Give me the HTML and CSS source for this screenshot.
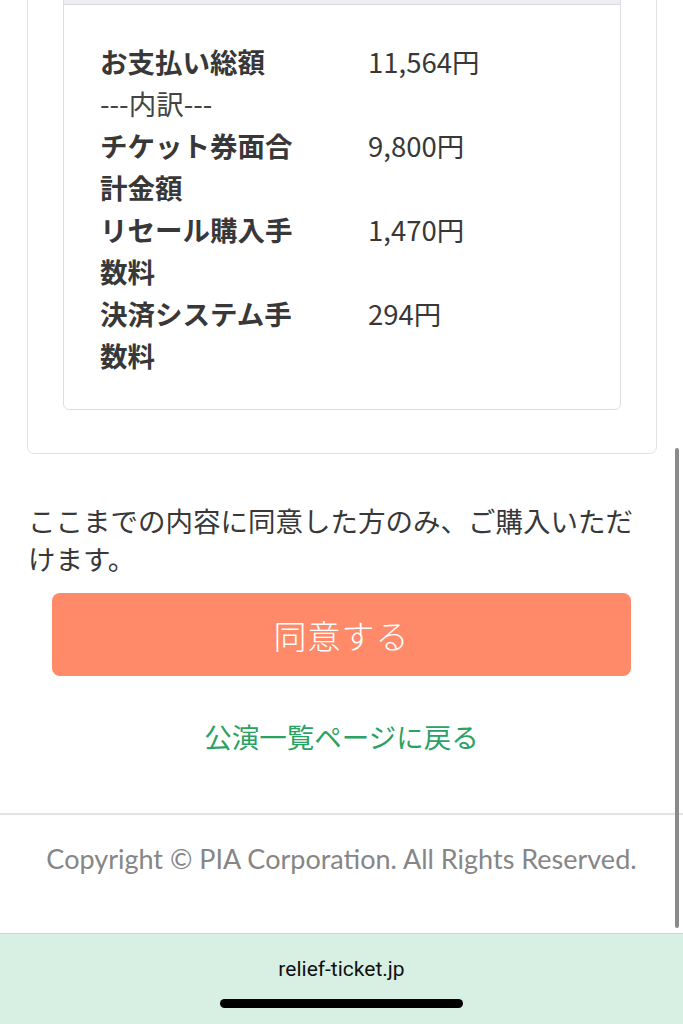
FILE: index.html
```html
<!DOCTYPE html>
<html lang="ja">
<head>
<meta charset="utf-8">
<title>購入確認</title>
<link rel="stylesheet" href="styles.css">
</head>
<body>
<div class="page">
  <section class="outer-card">
    <div class="inner-card">
      <div class="inner-head"></div>
      <div class="inner-body">
        <div class="fee-grid">
          <div class="label">お支払い総額</div><div class="value">11,564円</div>
          <div class="sub">---内訳---</div>
          <div class="label">チケット券面合計金額</div><div class="value">9,800円</div>
          <div class="label">リセール購入手数料</div><div class="value">1,470円</div>
          <div class="label">決済システム手数料</div><div class="value">294円</div>
        </div>
      </div>
    </div>
  </section>

  <p class="agree-text">ここまでの内容に同意した方のみ、ご購入いただけます。</p>
  <div class="btn-wrap"><button class="agree-btn" type="button">同意する</button></div>
  <div class="back-wrap"><a class="back-link" href="#">公演一覧ページに戻る</a></div>

  <footer class="site-footer">Copyright © PIA Corporation. All Rights Reserved.</footer>
</div>

<div class="browser-bar">
  <div class="url">relief-ticket.jp</div>
  <div class="home-indicator"></div>
</div>
<div class="scrollbar"></div>
</body>
</html>
```

FILE: styles.css
```css
html, body {
  margin: 0;
  padding: 0;
  background: #ffffff;
}
body {
  font-family: "Noto Sans CJK JP", "Noto Sans", sans-serif;
  color: #333333;
  overflow: hidden;
  height: 1024px;
  position: relative;
}
.page {
  margin-top: -94px;
}
.outer-card {
  margin: 0 26px 0 27px;
  border: 1px solid #e2e2e2;
  border-radius: 7px;
  padding: 36px 35px 43px 35px;
}
.inner-card {
  border: 1px solid #dedede;
  border-radius: 6px;
  overflow: hidden;
}
.inner-head {
  height: 60px;
  background: #eeeef2;
  border-bottom: 1px solid #dcdce0;
}
.inner-body {
  padding: 35px 20px 33px 36px;
}
.fee-grid {
  display: grid;
  grid-template-columns: 200px 1fr;
  column-gap: 68px;
  font-size: 27.5px;
  line-height: 42px;
}
.label {
  font-weight: 700;
  color: #383838;
}
.value {
  font-weight: 400;
  color: #383838;
}
.sub {
  grid-column: 1 / span 2;
  font-weight: 400;
  color: #444;
}
.agree-text {
  margin: 47px 27px 0 28px;
  font-size: 27.5px;
  line-height: 38px;
  color: #383838;
}
.btn-wrap {
  margin: 16px 52px 0 52px;
}
.agree-btn {
  display: block;
  width: 100%;
  height: 83px;
  border: none;
  border-radius: 8px;
  background: #ff8a6a;
  color: #ffffff;
  font-family: "Noto Sans CJK JP", sans-serif;
  font-size: 33px;
  font-weight: 300;
  letter-spacing: 1px;
}
.back-wrap {
  margin-top: 41px;
  text-align: center;
  line-height: 38px;
}
.back-link {
  font-size: 27.5px;
  color: #2aa262;
  text-decoration: none;
}
.site-footer {
  margin-top: 53px;
  border-top: 2px solid #e4e4e4;
  padding: 29px 0 59px;
  text-align: center;
  font-family: "Lato", "Noto Sans", sans-serif;
  font-size: 27px;
  line-height: 30px;
  color: #868686;
}
.browser-bar {
  position: absolute;
  left: 0;
  right: 0;
  bottom: 0;
  height: 90px;
  background: #d8f0e4;
  border-top: 1px solid #c4dccf;
  display: flex;
  flex-direction: column;
  align-items: center;
}
.url {
  margin-top: 22px;
  font-family: "Roboto", "Noto Sans", sans-serif;
  font-size: 21px;
  line-height: 26px;
  color: #111;
}
.home-indicator {
  margin-top: 17px;
  width: 243px;
  height: 9px;
  border-radius: 5px;
  background: #000;
}
.scrollbar {
  position: absolute;
  left: 675px;
  top: 448px;
  width: 4px;
  height: 480px;
  border-radius: 2px;
  background: #8a8a8a;
}
```
